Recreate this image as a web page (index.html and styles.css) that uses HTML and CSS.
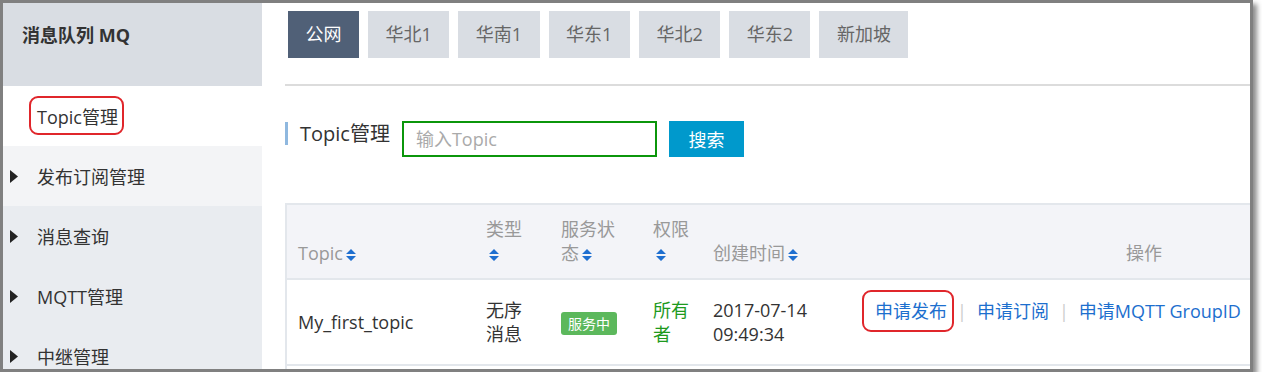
FILE: index.html
```html
<!DOCTYPE html>
<html lang="zh-CN"><head>
    <meta charset="UTF-8">
    <meta name="viewport" content="width=device-width, initial-scale=1.0">
    <title>消息队列 MQ</title>
    <link rel="stylesheet" href="styles.css">
</head>
<body>
    <div id="frame">
        <div id="sidebar">
            <div class="side-title">消息队列 MQ</div>
            <div class="side-sub"><span class="marked">Topic管理</span></div>
            <div class="side-item hover">
                <svg class="caret" width="8" height="13" viewBox="0 0 8 13"><path d="M0 0L8 6.5L0 13z" fill="#222"/></svg>
                发布订阅管理
            </div>
            <div class="side-item">
                <svg class="caret" width="8" height="13" viewBox="0 0 8 13"><path d="M0 0L8 6.5L0 13z" fill="#222"/></svg>
                消息查询
            </div>
            <div class="side-item">
                <svg class="caret" width="8" height="13" viewBox="0 0 8 13"><path d="M0 0L8 6.5L0 13z" fill="#222"/></svg>
                MQTT管理
            </div>
            <div class="side-item">
                <svg class="caret" width="8" height="13" viewBox="0 0 8 13"><path d="M0 0L8 6.5L0 13z" fill="#222"/></svg>
                中继管理
            </div>
        </div>

        <div id="main">
            <div class="tabs">
                <div class="tab active">公网</div>
                <div class="tab">华北1</div>
                <div class="tab">华南1</div>
                <div class="tab">华东1</div>
                <div class="tab">华北2</div>
                <div class="tab">华东2</div>
                <div class="tab">新加坡</div>
            </div>
            <div class="rule"></div>

            <div class="search-row">
                <h2 class="page-title">Topic管理</h2>
                <input type="text" class="search-input" placeholder="输入Topic">
                <button type="button" class="search-btn">搜索</button>
            </div>

            <table class="topic-table">
                <colgroup>
                    <col style="width:189px">
                    <col style="width:75px">
                    <col style="width:92px">
                    <col style="width:60px">
                    <col style="width:150px">
                    <col style="width:573px">
                </colgroup>
                <thead>
                    <tr>
                        <th>Topic<svg class="sort" width="10" height="12" viewBox="0 0 10 12"><path d="M5 0L10 5H0z M0 7H10L5 12z" fill="#1e6fd0"/></svg></th>
                        <th>类型 <svg class="sort" width="10" height="12" viewBox="0 0 10 12"><path d="M5 0L10 5H0z M0 7H10L5 12z" fill="#1e6fd0"/></svg></th>
                        <th>服务状态<svg class="sort" width="10" height="12" viewBox="0 0 10 12"><path d="M5 0L10 5H0z M0 7H10L5 12z" fill="#1e6fd0"/></svg></th>
                        <th>权限 <svg class="sort" width="10" height="12" viewBox="0 0 10 12"><path d="M5 0L10 5H0z M0 7H10L5 12z" fill="#1e6fd0"/></svg></th>
                        <th>创建时间<svg class="sort" width="10" height="12" viewBox="0 0 10 12"><path d="M5 0L10 5H0z M0 7H10L5 12z" fill="#1e6fd0"/></svg></th>
                        <th class="ops-head">操作</th>
                    </tr>
                </thead>
                <tbody>
                    <tr>
                        <td>My_first_topic</td>
                        <td>无序消息</td>
                        <td><span class="badge">服务中</span></td>
                        <td class="owner">所有者</td>
                        <td>2017-07-14 09:49:34</td>
                        <td class="ops">
                            <a class="marked">申请发布</a><span class="sep">|</span><a>申请订阅</a><span class="sep">|</span><a>申请MQTT GroupID</a><span class="sep">|</span>
                        </td>
                    </tr>
                    <tr class="empty-row"><td colspan="6"></td></tr>
                </tbody>
            </table>
        </div>
    </div>
</body></html>
```

FILE: styles.css
```css
body {
    margin: 0;
    background-color: #fff;
    font-family: "Open Sans", "Noto Sans CJK SC", sans-serif;
    color: #333;
}
#frame {
    width: 1247px;
    height: 366px;
    border: 3px solid #808080;
    box-shadow: 4px 4px 5px rgba(0, 0, 0, 0.45);
    display: flex;
    overflow: hidden;
    background-color: #fff;
}

/* sidebar */
#sidebar {
    width: 259px;
    flex: none;
    background-color: #e9ecf0;
}
.side-title {
    height: 83px;
    box-sizing: border-box;
    padding: 20px 0 0 19px;
    background-color: #d9dde3;
    font-size: 18px;
    line-height: 24px;
    font-weight: bold;
    color: #333;
}
.side-sub {
    height: 60px;
    background-color: #fff;
    display: flex;
    align-items: center;
    padding-left: 34px;
    font-size: 18px;
}
.side-item {
    height: 60px;
    display: flex;
    align-items: center;
    padding-left: 7px;
    font-size: 18px;
    color: #333;
}
.side-item.hover {
    background-color: #f3f4f6;
}
.caret {
    margin-right: 19px;
}
.marked {
    position: relative;
}
.marked::after {
    content: "";
    position: absolute;
    border: 2px solid #e0262b;
    border-radius: 9px;
}
.side-sub .marked::after {
    left: -8px;
    right: -6px;
    top: -7px;
    bottom: -6px;
}

/* main */
#main {
    flex: 1;
    min-width: 0;
    overflow: hidden;
    padding-left: 23px;
}
.tabs {
    display: flex;
    gap: 9px;
    margin: 8px 0 0 3px;
}
.tab {
    height: 47px;
    line-height: 47px;
    padding: 0 17.5px;
    background-color: #d9dde3;
    color: #666;
    font-size: 18px;
}
.tab.active {
    background-color: #506077;
    color: #fff;
}
.rule {
    height: 2px;
    background-color: #dcdcdc;
    margin-top: 26px;
}

.search-row {
    display: flex;
    align-items: flex-start;
    margin-top: 35px;
}
.page-title {
    margin: 1px 12px 0 0;
    border-left: 3px solid #8fb8df;
    padding-left: 12px;
    font-size: 20px;
    font-weight: normal;
    line-height: 23px;
    color: #333;
}
.search-input {
    width: 255px;
    height: 36px;
    box-sizing: border-box;
    border: 2px solid #0b960b;
    padding: 0 12px;
    font-family: inherit;
    font-size: 18px;
    outline: none;
}
.search-input::placeholder {
    color: #aaa;
}
.search-btn {
    margin-left: 12px;
    width: 75px;
    height: 36px;
    border: none;
    background-color: #0099cc;
    color: #fff;
    font-family: inherit;
    font-size: 18px;
    padding: 0;
}

/* table */
.topic-table {
    margin-top: 46px;
    width: 1139px;
    table-layout: fixed;
    border-collapse: collapse;
    border-top: 2px solid #e3e7ec;
    border-left: 2px solid #e3e7ec;
    font-size: 18px;
    line-height: 24px;
}
.topic-table th {
    height: 60px;
    background-color: #f3f4f8;
    color: #999;
    font-weight: normal;
    text-align: left;
    vertical-align: bottom;
    padding: 0 0 13px 11px;
    border-bottom: 2px solid #e3e7ec;
}
.topic-table td {
    height: 84px;
    padding: 0 0 0 11px;
    vertical-align: middle;
    border-bottom: 2px solid #e3e7ec;
}
.topic-table th:nth-child(2), .topic-table td:nth-child(2) {
    padding-right: 18px;
}
.topic-table th:nth-child(3), .topic-table td:nth-child(3) {
    padding-right: 17px;
}
.topic-table th:nth-child(4), .topic-table td:nth-child(4) {
    padding-right: 5px;
}
.topic-table th.ops-head {
    text-align: center;
}
.sort {
    margin-left: 3px;
    vertical-align: -1px;
}
.badge {
    display: inline-block;
    background-color: #5cb85c;
    color: #fff;
    font-size: 14px;
    line-height: 23px;
    padding: 0 7px;
    border-radius: 3px;
}
.owner {
    color: #1e9a1e;
}
.topic-table td.ops {
    height: 62px;
    white-space: nowrap;
    padding-bottom: 22px;
}
.ops a {
    color: #1d6fce;
}
.ops .marked {
    margin-left: 12px;
}
.ops .marked::after {
    left: -13px;
    right: -7px;
    top: -9px;
    bottom: -9px;
}
.sep {
    color: #ccc;
    margin: 0 10px;
}
.empty-row td {
    height: 40px;
}
```
